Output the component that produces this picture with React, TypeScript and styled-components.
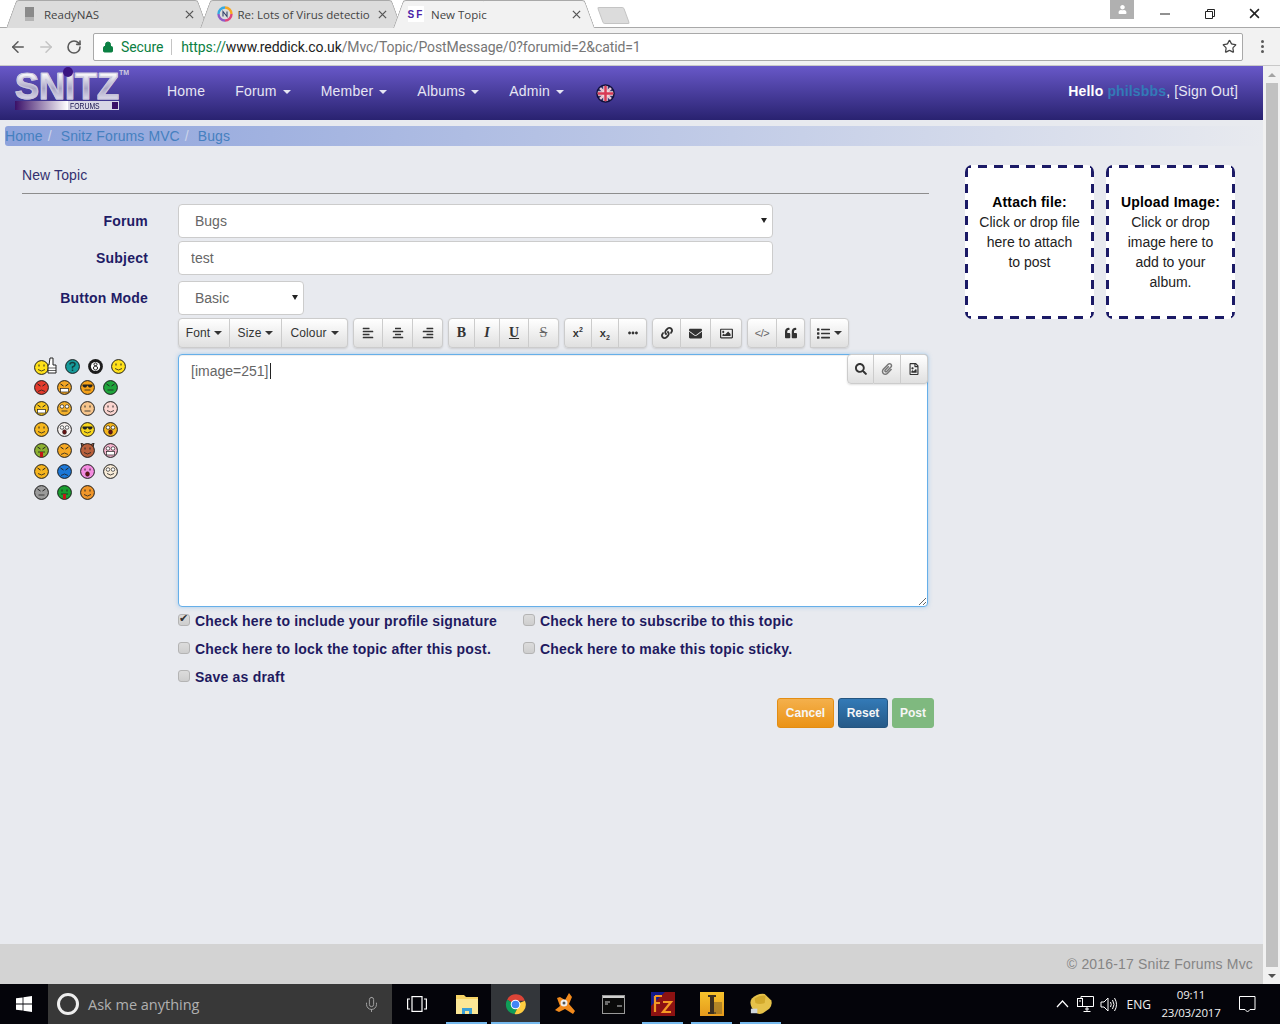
import React from 'react'
import styled, {createGlobalStyle} from 'styled-components'
import {ArrowLeft, ArrowRight, RotateCw, Star, Lock, Mic} from 'lucide-react'
import {
  FaAlignLeft, FaAlignCenter, FaAlignRight, FaEllipsisH, FaLink, FaEnvelope, FaRegImage,
  FaQuoteLeft, FaList, FaSearch, FaPaperclip, FaRegFileImage, FaUser,
} from 'react-icons/fa'

const GlobalStyle = createGlobalStyle`
  html, body { margin: 0; padding: 0; height: 100%; overflow: hidden; }
  body { font-family: "Liberation Sans", Arial, sans-serif; font-size: 14px; color: #333; }
  * { box-sizing: border-box; }
`

const Screen = styled.div`
  width: 1280px;
  height: 1024px;
  display: flex;
  flex-direction: column;
  overflow: hidden;
  background: #fff;
`

/* browser chrome */
const TabStrip = styled.div`
  height: 28px;
  flex: none;
  display: flex;
  padding-left: 6px;
  background: #fff;
  position: relative;
  border-bottom: 1px solid #a9a9a9;
`

const Tab = styled.div<{$active?: boolean}>`
  position: relative;
  width: 202px;
  height: 28px;
  margin-right: -8.5px;
  padding: 0 12px 0 19px;
  display: flex;
  align-items: center;
  z-index: ${p => (p.$active ? 2 : 1)};
  font-family: "Open Sans", sans-serif;
  font-size: 11.5px;
  color: #444;
  &::before, &::after {
    content: "";
    position: absolute;
    top: 0;
    bottom: 0;
    width: 50%;
    background: ${p => (p.$active ? '#f2f2f2' : '#dcdcdc')};
    border-top: 1px solid #a9a9a9;
    transform-origin: bottom;
  }
  &::before {
    left: 0;
    border-left: 1px solid #a9a9a9;
    border-radius: 3px 0 0 0;
    transform: skewX(-20deg);
  }
  &::after {
    right: 0;
    border-right: 1px solid #a9a9a9;
    border-radius: 0 3px 0 0;
    transform: skewX(20deg);
  }
  & > * { position: relative; z-index: 1; }
`

const Favicon = styled.span`
  width: 16px;
  height: 16px;
  margin-right: 3px;
  flex: none;
  display: flex;
  align-items: center;
`

const NewsFav = styled(Favicon)`
  margin-left: -2px;
  margin-right: 5px;
`

const SnitzFav = styled(Favicon)`
  margin-left: -4px;
  margin-right: 7px;
  justify-content: center;
  background: #fff;
  font: bold 10px "Liberation Sans", sans-serif;
  letter-spacing: 2px;
  color: #4b1fa8;
`

const TabTitle = styled.span`
  flex: 1;
  min-width: 0;
  white-space: nowrap;
`

const TabClose = styled.span`
  width: 14px;
  flex: none;
  margin-left: 6px;
  display: flex;
  justify-content: center;
  color: #555;
`

const NewTab = styled.div`
  width: 27px;
  height: 17px;
  margin: 7px 0 0 13px;
  background: #dcdcdc;
  border: 1px solid #c4c4c4;
  border-radius: 2px;
  transform: skewX(20deg);
`

const WindowControls = styled.div`
  margin-left: auto;
  padding-right: 3px;
  display: flex;
  align-items: flex-start;
  height: 27px;
`

const ProfileBadge = styled.div`
  width: 24px;
  height: 19px;
  margin-right: 8px;
  background: #b0b0b0;
  color: #fff;
  display: flex;
  align-items: center;
  justify-content: center;
`

const WinButton = styled.div`
  width: 45px;
  height: 27px;
  display: flex;
  align-items: center;
  justify-content: center;
`

const Toolbar = styled.div`
  height: 38px;
  flex: none;
  display: flex;
  align-items: center;
  background: #f2f2f2;
  border-bottom: 1px solid #c9c9c9;
  color: #5a5a5a;
`

const NavIcon = styled.div<{$dim?: boolean}>`
  width: 28px;
  height: 28px;
  display: flex;
  align-items: center;
  justify-content: center;
  color: ${p => (p.$dim ? '#c4c4c4' : '#5a5a5a')};
`

const NavIcons = styled.div`
  display: flex;
  padding-left: 4px;
  width: 93px;
`

const Omnibox = styled.div`
  width: 1150px;
  height: 28px;
  background: #fff;
  border: 1px solid #a9a9a9;
  border-radius: 2px;
  display: flex;
  align-items: center;
  padding-left: 8px;
  font-family: "Roboto", sans-serif;
  font-size: 14px;
  letter-spacing: -.1px;
  white-space: nowrap;
`

const SecureLabel = styled.span`
  color: #0b8043;
  margin-left: 7px;
  padding-right: 8px;
  border-right: 1px solid #c4c4c4;
  margin-right: 9px;
`

const Scheme = styled.span`color: #0b8043;`
const Host = styled.span`color: #222;`
const UrlPath = styled.span`color: #767676;`

const OmniStar = styled.div`
  margin-left: auto;
  padding-right: 5px;
  display: flex;
  color: #444;
`

const MenuDots = styled.div`
  margin-left: 18px;
  display: flex;
  flex-direction: column;
  gap: 2px;
  & > span { width: 3px; height: 3px; background: #5a5a5a; border-radius: 50%; }
`

/* page */
const Viewport = styled.div`
  flex: 1;
  display: flex;
  min-height: 0;
`

const Page = styled.div`
  width: 1263px;
  display: flex;
  flex-direction: column;
  background: #e8eaef;
`

const ScrollBar = styled.div`
  width: 17px;
  padding: 0 2px 0 3px;
  background: #f1f1f1;
  display: flex;
  flex-direction: column;
  align-items: stretch;
`

const ScrollArrow = styled.div<{$down?: boolean}>`
  height: 17px;
  flex: none;
  display: flex;
  align-items: center;
  justify-content: center;
  &::before {
    content: "";
    border-left: 4px solid transparent;
    border-right: 4px solid transparent;
    ${p => (p.$down ? 'border-top: 4px solid #505050;' : 'border-bottom: 4px solid #a3a3a3;')}
  }
`

const ScrollThumb = styled.div`
  flex: 1;
  background: #c1c1c1;
`

const NavBar = styled.div`
  height: 54px;
  flex: none;
  display: flex;
  align-items: center;
  padding: 0 25px 4px 0;
  background: linear-gradient(#6858c8, #292270);
  color: #e6e6f4;
`

const Logo = styled.div`
  width: 152px;
  padding-left: 15px;
  position: relative;
  flex: none;
`

const LogoWord = styled.div`
  font: bold 36px/28px "Liberation Sans", sans-serif;
  background: linear-gradient(#ffffff, #a8a4c4 55%, #e4e2f0);
  -webkit-background-clip: text;
  background-clip: text;
  color: transparent;
  -webkit-text-stroke: 1.2px #c9c6dc;
`

const LogoBall = styled.span`
  position: absolute;
  left: 63px;
  top: -6px;
  width: 10px;
  height: 10px;
  border-radius: 50%;
  background: #3a1480;
  z-index: 1;
`

const LogoTm = styled.span`
  position: absolute;
  left: 119px;
  top: -4px;
  font-size: 7px;
  font-weight: bold;
  color: #cfcde0;
`

const LogoBar = styled.div`
  display: flex;
  align-items: center;
  height: 9px;
  width: 104px;
  background: #d8d6e6;
`

const LogoFade = styled.div`
  width: 63px;
  height: 9px;
  margin-right: 2px;
  background: linear-gradient(90deg, #3a1068, #ffffff);
`

const LogoForums = styled.span`
  font-size: 9.5px;
  line-height: 9px;
  color: #17124e;
  flex: 1;
  white-space: nowrap;
  transform: scaleX(.72);
  transform-origin: left;
`

const LogoSquare = styled.div`
  width: 9px;
  height: 9px;
  background: #3a1068;
  border: 1px solid #d8d6e8;
`

const NavItem = styled.a`
  padding: 0 15px;
  font-size: 14px;
  letter-spacing: .2px;
  white-space: nowrap;
  color: #e6e6f4;
`

const Caret = styled.span`
  display: inline-block;
  margin-left: 2px;
  vertical-align: middle;
  border-top: 4px solid;
  border-left: 4px solid transparent;
  border-right: 4px solid transparent;
`

const FlagWrap = styled.div`
  margin: 4px 0 0 17px;
  width: 19px;
  height: 19px;
`

const Greeting = styled.div`
  margin-left: auto;
  white-space: nowrap;
  letter-spacing: .15px;
  color: #e6e6f4;
  b { color: #fff; }
`

const UserLink = styled.b`
  && { color: #337ab7; }
`

const Breadcrumb = styled.div`
  height: 20px;
  margin: 6px 0 0 5px;
  display: flex;
  align-items: center;
  border-radius: 3px 0 0 3px;
  background: linear-gradient(90deg, #8ea3dc, #e8eaef);
  color: #4580c0;
  letter-spacing: .1px;
  flex: none;
`

const CrumbSep = styled.span`
  padding: 0 5px;
  color: #ccd4ea;
  white-space: pre;
`

const Content = styled.div`
  flex: 1;
  display: flex;
  align-items: flex-start;
  padding: 19px 0 0 22px;
`

const FormColumn = styled.div`
  width: 907px;
  flex: none;
`

const Heading = styled.div`
  height: 29px;
  line-height: 20px;
  letter-spacing: .1px;
  color: #33306f;
  border-bottom: 1px solid #8d8d8d;
  margin-bottom: 10px;
`

const FieldRow = styled.div<{$gap?: number}>`
  display: grid;
  grid-template-columns: 126px 1fr;
  column-gap: 30px;
  align-items: center;
  margin-bottom: ${p => p.$gap ?? 0}px;
`

const FieldLabel = styled.label`
  text-align: right;
  font-weight: bold;
  letter-spacing: .2px;
  color: #1f1c66;
`

const SelectWrap = styled.div<{$width: number}>`
  position: relative;
  width: ${p => p.$width}px;
  &::after {
    content: "";
    position: absolute;
    right: 6px;
    top: 14px;
    border-top: 5px solid #222;
    border-left: 3px solid transparent;
    border-right: 3px solid transparent;
    pointer-events: none;
  }
`

const Select = styled.select`
  width: 100%;
  height: 34px;
  padding: 6px 12px 6px 16px;
  appearance: none;
  background: #fff;
  border: 1px solid #ccc;
  border-radius: 4px;
  font: 14px "Liberation Sans", sans-serif;
  color: #666;
`

const TextInput = styled.input`
  width: 595px;
  height: 34px;
  padding: 6px 12px;
  background: #fff;
  border: 1px solid #ccc;
  border-radius: 4px;
  font: 14px "Liberation Sans", sans-serif;
  color: #666;
`

const EditorToolbar = styled.div`
  display: flex;
  height: 30px;
  gap: 5px;
  margin-bottom: 6px;
`

const BtnGroup = styled.div`
  display: flex;
  border-radius: 4px;
  box-shadow: 0 1px 2px rgba(0, 0, 0, .12);
`

const ToolBtn = styled.div<{$w: number; $serif?: boolean}>`
  width: ${p => p.$w}px;
  height: 30px;
  display: flex;
  align-items: center;
  justify-content: center;
  gap: 2px;
  background: linear-gradient(#ffffff, #e0e0e0);
  border: 1px solid #ccc;
  border-left-width: 0;
  font: ${p => (p.$serif ? 'bold 14px "Liberation Serif", serif' : '12px "Liberation Sans", sans-serif')};
  letter-spacing: ${p => (p.$serif ? 0 : '.15px')};
  color: #333;
  &:first-child { border-left-width: 1px; border-radius: 4px 0 0 4px; }
  &:last-child { border-radius: 0 4px 4px 0; }
`

const ItalicMark = styled.i`font-weight: bold;`
const UnderMark = styled.u`font-weight: bold;`
const StrikeMark = styled.s`font-weight: normal; color: #666;`
const ScriptX = styled.b`font: bold 11px "Liberation Sans", sans-serif;`
const CodeMark = styled.span`font-size: 11px; color: #666; letter-spacing: -.5px;`
const SupMark = styled.sup`font-size: 7px; line-height: 0;`
const SubMark = styled.sub`font-size: 7px; line-height: 0;`

const EditorRow = styled.div`
  display: grid;
  grid-template-columns: 156px 1fr;
`

const Smileys = styled.div`
  padding: 5px 0 0 12px;
  display: flex;
  flex-direction: column;
  gap: 6px;
`

const SmileyRow = styled.div`
  display: flex;
  gap: 8px;
  height: 15px;
  align-items: center;
`

const EditorWrap = styled.div`
  position: relative;
  width: 750px;
  height: 253px;
`

const EditorArea = styled.textarea`
  display: block;
  width: 100%;
  height: 100%;
  padding: 6px 12px;
  background: #fff;
  border: 1px solid #66afe9;
  border-radius: 4px;
  font: 14px/20px "Liberation Sans", sans-serif;
  color: #666;
  outline: none;
  box-shadow: inset 0 1px 1px rgba(0, 0, 0, .075), 0 0 4px rgba(102, 175, 233, .5);
`

const TextCaret = styled.span`
  position: absolute;
  left: 92px;
  top: 9px;
  width: 1px;
  height: 16px;
  background: #222;
`

const FloatTools = styled(BtnGroup)`
  position: absolute;
  top: 0;
  right: 0;
`

const OptionsGrid = styled.div`
  margin: 0 0 0 156px;
  display: grid;
  grid-template-columns: 345px 1fr;
  grid-auto-rows: 28px;
`

const OptionLabel = styled.label`
  display: flex;
  align-items: center;
  gap: 5px;
  font-weight: bold;
  letter-spacing: .2px;
  color: #1f1a60;
  white-space: nowrap;
`

const CheckBox = styled.input`
  appearance: none;
  width: 12px;
  height: 12px;
  margin: -3px 0 0 0;
  position: relative;
  background: linear-gradient(#dcdcdc, #cecece);
  border: 1px solid #b4b4b4;
  border-radius: 3px;
  &:checked::after {
    content: "✔";
    position: absolute;
    left: 0;
    top: -3px;
    font-size: 11px;
    color: #333;
  }
`

const Actions = styled.div`
  display: flex;
  justify-content: flex-end;
  gap: 4px;
  margin: 7px -5px 0 0;
`

const variants = {
  warning: 'background: linear-gradient(#f4b04c, #eb9316); border-color: #e38d13;',
  primary: 'background: linear-gradient(#337ab7, #265a88); border-color: #245580;',
  success: 'background: #7fb97f; border-color: #7fb97f;',
}

const ActionBtn = styled.div<{$kind: keyof typeof variants; $w: number}>`
  width: ${p => p.$w}px;
  height: 30px;
  display: flex;
  align-items: center;
  justify-content: center;
  border: 1px solid;
  border-radius: 3px;
  font-size: 12px;
  font-weight: bold;
  color: #f6f6f6;
  ${p => variants[p.$kind]}
`

const DropColumn = styled.div`
  display: flex;
  gap: 12px;
  margin-left: 36px;
`

const dashH = 'linear-gradient(90deg, #1b1a66 9px, transparent 9px)'
const dashV = 'linear-gradient(#1b1a66 9px, transparent 9px)'

const DropBox = styled.div`
  width: 129px;
  height: 154px;
  padding: 27px 11px 0;
  border-radius: 7px;
  background:
    ${dashH} 13px 0 / 16px 3px repeat-x,
    ${dashH} 13px 100% / 16px 3px repeat-x,
    ${dashV} 0 3px / 3px 16px repeat-y,
    ${dashV} 100% 3px / 3px 16px repeat-y,
    #fff;
  text-align: center;
  line-height: 20px;
  color: #222;
  b { display: block; color: #000; letter-spacing: .2px; white-space: nowrap; margin: 0 -4px; }
`

const Footer = styled.div`
  height: 40px;
  flex: none;
  background: #d3d3d3;
  display: flex;
  align-items: center;
  justify-content: flex-end;
  padding: 0 10px 0 0;
  letter-spacing: .18px;
  color: #858585;
`

/* windows taskbar */
const Taskbar = styled.div`
  height: 40px;
  flex: none;
  display: flex;
  align-items: stretch;
  background: #04040a;
  color: #fff;
`

const StartBtn = styled.div`
  width: 48px;
  display: flex;
  align-items: center;
  justify-content: center;
`

const SearchBox = styled.div`
  width: 344px;
  display: flex;
  align-items: center;
  padding-left: 9px;
  background: #383838;
  color: #b0b0b0;
  font-family: "Open Sans", sans-serif;
  font-size: 14.5px;
`

const Cortana = styled.span`
  width: 22px;
  height: 22px;
  border: 3px solid #eee;
  border-radius: 50%;
  margin-right: 9px;
`

const SearchMic = styled.span`
  margin-left: auto;
  margin-right: 12px;
  display: flex;
  color: #a8a8a8;
`

const TaskBtn = styled.div<{$active?: boolean; $open?: boolean}>`
  width: 49px;
  position: relative;
  display: flex;
  align-items: center;
  justify-content: center;
  background: ${p => (p.$active ? '#33363a' : 'transparent')};
  &::after {
    content: "";
    position: absolute;
    bottom: 0;
    left: ${p => (p.$active ? 0 : 4)}px;
    right: ${p => (p.$active ? 0 : 4)}px;
    height: 2px;
    background: ${p => (p.$open ? '#76b9ed' : 'transparent')};
  }
`

const TaskViewBtn = styled(TaskBtn)`
  width: 50px;
`

const Tray = styled.div`
  margin-left: auto;
  display: flex;
  align-items: center;
  font-family: "Open Sans", sans-serif;
  font-size: 12px;
  color: #f0f0f0;
`

const TrayIcon = styled.span`
  width: 23px;
  display: flex;
  justify-content: center;
`

const TrayLang = styled.span`
  margin: 0 7px 0 7px;
`

const Clock = styled.div`
  width: 66px;
  text-align: center;
  line-height: 18px;
  font-size: 11.5px;
  letter-spacing: -.2px;
`

const Notify = styled.span`
  width: 30px;
  margin: 0 18px 0 8px;
  display: flex;
  justify-content: center;
`

/* drawings */
type FaceProps = {
  color: string
  eyes?: 'dot' | 'wide' | 'shades' | 'angry'
  mouth?: 'smile' | 'frown' | 'flat' | 'teeth' | 'open' | 'tongue'
  horns?: boolean
}

function Face({color, eyes = 'dot', mouth = 'smile', horns}: FaceProps) {
  return (
    <svg width="15" height="15" viewBox="0 0 15 15">
      {horns && <path d="M2 4L1 0L5 2M13 4L14 0L10 2" fill={color} stroke="#222" />}
      <circle cx="7.5" cy="7.5" r="6.9" fill={color} stroke="#1c1c1c" strokeWidth="1" />
      {eyes === 'dot' && <path d="M5 4.5v2M10 4.5v2" stroke="#222" />}
      {eyes === 'wide' && (
        <g fill="#fff" stroke="#222" strokeWidth=".7">
          <circle cx="5" cy="5.5" r="1.8" />
          <circle cx="10" cy="5.5" r="1.8" />
        </g>
      )}
      {eyes === 'shades' && <path d="M2.5 4.5h10v1.5l-1.5 1.5h-2l-1.5-2-1.5 2h-2L2.5 6z" fill="#222" />}
      {eyes === 'angry' && <path d="M3.5 4l3 2M11.5 4l-3 2" stroke="#222" />}
      {mouth === 'smile' && <path d="M4 9.5q3.5 3 7 0" fill="none" stroke="#222" strokeWidth=".8" />}
      {mouth === 'frown' && <path d="M4 11.5q3.5-3 7 0" fill="none" stroke="#222" strokeWidth=".8" />}
      {mouth === 'flat' && <path d="M4.5 10h6" stroke="#222" strokeWidth=".8" />}
      {mouth === 'teeth' && <rect x="3.5" y="8.5" width="8" height="3.5" fill="#fff" stroke="#222" strokeWidth=".7" />}
      {mouth === 'open' && <ellipse cx="7.5" cy="10" rx="2" ry="2.3" fill="#611" stroke="#222" strokeWidth=".5" />}
      {mouth === 'tongue' && (
        <>
          <path d="M4 9h7" stroke="#222" strokeWidth=".8" />
          <path d="M6 9h3v5H6z" fill="#c01818" />
        </>
      )}
    </svg>
  )
}

function ThumbsFace() {
  return (
    <svg width="23" height="19" viewBox="0 0 23 19">
      <circle cx="7.5" cy="10.5" r="6.9" fill="#ffe11a" stroke="#1c1c1c" />
      <path d="M5 7.5v2M10 7.5v2" stroke="#222" />
      <path d="M4 12.5q3.5 3 7 0" fill="none" stroke="#222" strokeWidth=".8" />
      <path d="M15 8h-1v8h8V8h-3V1h-3z" fill="#fff" stroke="#222" />
      <path d="M14 11h8M14 13.5h8" stroke="#222" strokeWidth=".7" />
    </svg>
  )
}

function HelpFace() {
  return (
    <svg width="15" height="15" viewBox="0 0 15 15">
      <circle cx="7.5" cy="7.5" r="6.9" fill="#159a9a" stroke="#1c1c1c" />
      <path d="M5 5.5q0-2 2.5-2t2.5 2q0 1.5-2.5 2.5v1.5M7.5 10.5v1.5" fill="none" stroke="#143c3c" strokeWidth="1.5" />
    </svg>
  )
}

function EightBall() {
  return (
    <svg width="15" height="15" viewBox="0 0 15 15">
      <circle cx="7.5" cy="7.5" r="7.4" fill="#1c1c1c" />
      <circle cx="7.5" cy="7.5" r="4.6" fill="#fff" />
      <path d="M7.5 3.9a1.5 1.5 0 1 0 .01 0M7.5 7a2 2 0 1 0 .01 0" fill="none" stroke="#111" />
    </svg>
  )
}

const smileyRows: FaceProps[][] = [
  [{color: '#e33a2c', eyes: 'angry', mouth: 'frown'}, {color: '#f4a623', eyes: 'angry', mouth: 'teeth'}, {color: '#f6a21a', eyes: 'shades', mouth: 'flat'}, {color: '#1fa53c', eyes: 'angry', mouth: 'flat'}],
  [{color: '#f7c51e', eyes: 'angry', mouth: 'teeth'}, {color: '#f4b12c', eyes: 'wide', mouth: 'flat'}, {color: '#f6c58c', eyes: 'dot', mouth: 'flat'}, {color: '#fbd5d0', eyes: 'dot', mouth: 'smile'}],
  [{color: '#f6b71d'}, {color: '#f5f0ee', eyes: 'wide', mouth: 'open'}, {color: '#f9d71c', eyes: 'shades'}, {color: '#f6b71d', eyes: 'wide', mouth: 'open'}],
  [{color: '#8cb031', eyes: 'angry', mouth: 'tongue'}, {color: '#f6a823', eyes: 'angry', mouth: 'frown'}, {color: '#b8603c', horns: true}, {color: '#f7b6d0', eyes: 'wide', mouth: 'teeth'}],
  [{color: '#f6b41d', eyes: 'angry'}, {color: '#1c78d8', eyes: 'angry', mouth: 'frown'}, {color: '#f48ce0', mouth: 'open'}, {color: '#f8ecd8', eyes: 'wide', mouth: 'smile'}],
  [{color: '#9a9a9a', eyes: 'angry', mouth: 'flat'}, {color: '#1a9e30', mouth: 'tongue'}, {color: '#f0962a'}],
]

function UkFlag() {
  return (
    <svg width="19" height="19" viewBox="0 0 19 19">
      <defs>
        <clipPath id="flag-round"><circle cx="9.5" cy="9.5" r="7.8" /></clipPath>
      </defs>
      <circle cx="9.5" cy="9.5" r="9.3" fill="#12103a" />
      <g clipPath="url(#flag-round)">
        <rect width="19" height="19" fill="#34356f" />
        <path d="M0 0L19 19M19 0L0 19" stroke="#e8c4d0" strokeWidth="2.5" />
        <path d="M9.5 0V19M0 9.5H19" stroke="#f0d8dc" strokeWidth="4.5" />
        <path d="M9.5 0V19M0 9.5H19" stroke="#d83a55" strokeWidth="2.5" />
      </g>
    </svg>
  )
}

function ChromeIcon() {
  return (
    <svg width="23" height="23" viewBox="0 0 24 24">
      <path d="M12 12L3.3 7A10 10 0 0 1 21.8 8H12z" fill="#db4437" />
      <path d="M12 12L3.3 7A10 10 0 0 0 11 22L16 12z" fill="#0f9d58" />
      <path d="M12 12L21.8 8A10 10 0 0 1 11 22L16 12z" fill="#ffcd40" />
      <circle cx="12" cy="12" r="5" fill="#fff" />
      <circle cx="12" cy="12" r="4" fill="#4285f4" />
    </svg>
  )
}

function FolderIcon() {
  return (
    <svg width="22" height="20" viewBox="0 0 22 20">
      <path d="M0 1h8l2 2h12v17H0z" fill="#f6d365" />
      <path d="M0 5h22v15H0z" fill="#fbe796" />
      <path d="M6 20v-6h10v6h-3v-3h-4v3z" fill="#3aa0d8" />
    </svg>
  )
}

function AvastIcon() {
  return (
    <svg width="24" height="24" viewBox="0 0 24 24">
      <path d="M16 1l3 4-3 7 6 7-2 3-8-5-6 3-4-2 5-4-3-8 3-1 5 3z" fill="#f28a1c" />
      <circle cx="11" cy="11" r="3.5" fill="#eee" />
      <circle cx="11" cy="11" r="1.5" fill="#555" />
    </svg>
  )
}

function ConsoleIcon() {
  return (
    <svg width="23" height="19" viewBox="0 0 23 19">
      <rect x=".5" y=".5" width="22" height="18" fill="#0a0a0a" stroke="#999" />
      <rect x="1" y="1" width="21" height="2" fill="#cfcfcf" />
      <path d="M3 7h5M3 9h3M15 11h5" stroke="#ccc" />
    </svg>
  )
}

function FileZillaIcon() {
  return (
    <svg width="24" height="24" viewBox="0 0 24 24">
      <rect width="24" height="24" fill="#8c1212" />
      <path d="M0 0h14L0 14z" fill="#141a8a" />
      <path d="M4 4h7M4 4v16M4 11h5M12 10h8l-8 10h8" fill="none" stroke="#f49a24" strokeWidth="2.2" />
    </svg>
  )
}

function IdeaIcon() {
  return (
    <svg width="24" height="24" viewBox="0 0 24 24">
      <defs>
        <linearGradient id="idea-fill" x1="0" y1="0" x2="0" y2="1">
          <stop offset="0" stopColor="#f6c22c" />
          <stop offset="1" stopColor="#e59a1c" />
        </linearGradient>
      </defs>
      <rect width="24" height="24" fill="url(#idea-fill)" />
      <path d="M8 3h8v2h-2v15h2v2H8v-2h2V5H8z" fill="#3c3020" />
      <path d="M14 10h8v12h-8z" fill="#8a6a2a" opacity=".6" />
    </svg>
  )
}

function DriveIcon() {
  return (
    <svg width="24" height="23" viewBox="0 0 26 25">
      <path d="M3 6q6-6 14-5l7 7q2 4-2 9l-7 5q-5 2-8-1L3 16Q0 10 3 6z" fill="#e6c24a" />
      <path d="M6 6q6-4 12-3l-1 8q-6 2-10 0z" fill="#d2a92c" />
      <rect x="2" y="17" width="7" height="5" fill="#cfd6dc" />
    </svg>
  )
}

function WindowsLogo() {
  return (
    <svg width="16" height="16" viewBox="0 0 16 16" fill="#fff">
      <path d="M0 2.3L6.6 1.4V7.6H0zM7.4 1.3L16 0V7.6H7.4zM0 8.4H6.6V14.6L0 13.7zM7.4 8.4H16V16L7.4 14.7z" />
    </svg>
  )
}

function TaskViewIcon() {
  return (
    <svg width="20" height="16" viewBox="0 0 20 16" fill="none" stroke="#fff" strokeWidth="1.2">
      <rect x="5" y=".6" width="10" height="14.8" />
      <path d="M3 3H.6v10H3M17 3h2.4v10H17" />
    </svg>
  )
}

function ChevronUp() {
  return (
    <svg width="13" height="8" viewBox="0 0 13 8" fill="none" stroke="#fff" strokeWidth="1.2">
      <path d="M1 7l5.5-6L12 7" />
    </svg>
  )
}

function NetworkIcon() {
  return (
    <svg width="17" height="16" viewBox="0 0 17 16" fill="none" stroke="#fff">
      <path d="M4 .5h12.5v10H4zM8 13h4M10 10.5V15M6.5 15.5h7" />
      <rect x=".5" y="2.5" width="5" height="8" fill="#04040a" />
      <path d="M2 5h2" />
    </svg>
  )
}

function VolumeIcon() {
  return (
    <svg width="17" height="15" viewBox="0 0 17 15" fill="none" stroke="#fff">
      <path d="M1 5h3l4-4v13l-4-4H1zM10.5 5q1.5 2.5 0 5M12.5 3q3 4.5 0 9M14.5 1q4 6.5 0 13" />
    </svg>
  )
}

function CommentIcon() {
  return (
    <svg width="17" height="17" viewBox="0 0 17 17" fill="none" stroke="#fff">
      <path d="M.5 .5h15.5v13h-5l-2.5 2.5-2.500-2.500H.5z" />
    </svg>
  )
}

function CloseGlyph({size, stroke}: {size: number; stroke: string}) {
  return (
    <svg width={size} height={size} viewBox="0 0 10 10" fill="none" stroke={stroke} strokeWidth="1.4">
      <path d="M1 1l8 8M9 1l-8 8" />
    </svg>
  )
}

function NasFavicon() {
  return (
    <svg width="9" height="14" viewBox="0 0 9 14">
      <rect width="9" height="14" fill="#8a8a8a" />
      <rect y="10" width="9" height="4" fill="#b4b4b4" />
    </svg>
  )
}

function NewsFavicon() {
  return (
    <svg width="16" height="16" viewBox="0 0 16 16" fill="none" strokeWidth="2.4">
      <path d="M8 1.5A6.5 6.5 0 0 1 14.5 8" stroke="#f5a623" />
      <path d="M14.5 8A6.5 6.5 0 0 1 8 14.5" stroke="#e0457b" />
      <path d="M8 14.5A6.5 6.5 0 0 1 1.5 8" stroke="#8e5bc7" />
      <path d="M1.5 8A6.5 6.5 0 0 1 8 1.5" stroke="#36a9e1" />
      <path d="M6 10.5v-5l4 5v-5" stroke="#34406b" strokeWidth="1.1" />
    </svg>
  )
}

export default function App() {
  return (
    <Screen>
      <GlobalStyle />
      <TabStrip>
        <Tab>
          <Favicon><NasFavicon /></Favicon>
          <TabTitle>ReadyNAS</TabTitle>
          <TabClose><CloseGlyph size={9} stroke="#555" /></TabClose>
        </Tab>
        <Tab>
          <NewsFav><NewsFavicon /></NewsFav>
          <TabTitle>Re: Lots of Virus detectio</TabTitle>
          <TabClose><CloseGlyph size={9} stroke="#555" /></TabClose>
        </Tab>
        <Tab $active>
          <SnitzFav>SF</SnitzFav>
          <TabTitle>New Topic</TabTitle>
          <TabClose><CloseGlyph size={9} stroke="#555" /></TabClose>
        </Tab>
        <NewTab />
        <WindowControls>
          <ProfileBadge><FaUser size={9} /></ProfileBadge>
          <WinButton>
            <svg width="10" height="2" viewBox="0 0 10 2"><path d="M0 1h10" stroke="#222" /></svg>
          </WinButton>
          <WinButton>
            <svg width="10" height="10" viewBox="0 0 10 10" fill="none" stroke="#222">
              <path d="M.5 2.5h7v7h-7zM2.5 2.5v-2h7v7h-2" />
            </svg>
          </WinButton>
          <WinButton><CloseGlyph size={11} stroke="#222" /></WinButton>
        </WindowControls>
      </TabStrip>

      <Toolbar>
        <NavIcons>
          <NavIcon><ArrowLeft size={18} /></NavIcon>
          <NavIcon $dim><ArrowRight size={18} /></NavIcon>
          <NavIcon><RotateCw size={16} strokeWidth={2.4} /></NavIcon>
        </NavIcons>
        <Omnibox>
          <Lock size={12} color="#0b8043" fill="#0b8043" />
          <SecureLabel>Secure</SecureLabel>
          <Scheme>https://</Scheme>
          <Host>www.reddick.co.uk</Host>
          <UrlPath>/Mvc/Topic/PostMessage/0?forumid=2&amp;catid=1</UrlPath>
          <OmniStar><Star size={15} /></OmniStar>
        </Omnibox>
        <MenuDots><span /><span /><span /></MenuDots>
      </Toolbar>

      <Viewport>
        <Page>
          <NavBar>
            <Logo>
              <LogoBall />
              <LogoTm>TM</LogoTm>
              <LogoWord>SNITZ</LogoWord>
              <LogoBar>
                <LogoFade />
                <LogoForums>FORUMS</LogoForums>
                <LogoSquare />
              </LogoBar>
            </Logo>
            <NavItem>Home</NavItem>
            <NavItem>Forum <Caret /></NavItem>
            <NavItem>Member <Caret /></NavItem>
            <NavItem>Albums <Caret /></NavItem>
            <NavItem>Admin <Caret /></NavItem>
            <FlagWrap><UkFlag /></FlagWrap>
            <Greeting><b>Hello</b> <UserLink>philsbbs</UserLink>, [Sign Out]</Greeting>
          </NavBar>

          <Breadcrumb>
            Home<CrumbSep>/ </CrumbSep>Snitz Forums MVC<CrumbSep>/ </CrumbSep>Bugs
          </Breadcrumb>

          <Content>
            <FormColumn>
              <Heading>New Topic</Heading>
              <FieldRow $gap={3}>
                <FieldLabel>Forum</FieldLabel>
                <SelectWrap $width={595}>
                  <Select defaultValue="Bugs"><option>Bugs</option></Select>
                </SelectWrap>
              </FieldRow>
              <FieldRow $gap={6}>
                <FieldLabel>Subject</FieldLabel>
                <TextInput defaultValue="test" />
              </FieldRow>
              <FieldRow $gap={3}>
                <FieldLabel>Button Mode</FieldLabel>
                <SelectWrap $width={126}>
                  <Select defaultValue="Basic"><option>Basic</option></Select>
                </SelectWrap>
              </FieldRow>
              <FieldRow>
                <span />
                <EditorToolbar>
                  <BtnGroup>
                    <ToolBtn $w={52}>Font <Caret /></ToolBtn>
                    <ToolBtn $w={52}>Size <Caret /></ToolBtn>
                    <ToolBtn $w={66}>Colour <Caret /></ToolBtn>
                  </BtnGroup>
                  <BtnGroup>
                    <ToolBtn $w={30}><FaAlignLeft size={12} /></ToolBtn>
                    <ToolBtn $w={30}><FaAlignCenter size={12} /></ToolBtn>
                    <ToolBtn $w={30}><FaAlignRight size={12} /></ToolBtn>
                  </BtnGroup>
                  <BtnGroup>
                    <ToolBtn $w={27} $serif>B</ToolBtn>
                    <ToolBtn $w={25} $serif><ItalicMark>I</ItalicMark></ToolBtn>
                    <ToolBtn $w={29} $serif><UnderMark>U</UnderMark></ToolBtn>
                    <ToolBtn $w={30} $serif><StrikeMark>S</StrikeMark></ToolBtn>
                  </BtnGroup>
                  <BtnGroup>
                    <ToolBtn $w={28}><ScriptX>x<SupMark>2</SupMark></ScriptX></ToolBtn>
                    <ToolBtn $w={27}><ScriptX>x<SubMark>2</SubMark></ScriptX></ToolBtn>
                    <ToolBtn $w={28}><FaEllipsisH size={10} /></ToolBtn>
                  </BtnGroup>
                  <BtnGroup>
                    <ToolBtn $w={29}><FaLink size={12} /></ToolBtn>
                    <ToolBtn $w={30}><FaEnvelope size={13} /></ToolBtn>
                    <ToolBtn $w={31}><FaRegImage size={13} /></ToolBtn>
                  </BtnGroup>
                  <BtnGroup>
                    <ToolBtn $w={30}><CodeMark>&lt;/&gt;</CodeMark></ToolBtn>
                    <ToolBtn $w={28}><FaQuoteLeft size={12} /></ToolBtn>
                  </BtnGroup>
                  <BtnGroup>
                    <ToolBtn $w={39}><FaList size={13} /><Caret /></ToolBtn>
                  </BtnGroup>
                </EditorToolbar>
              </FieldRow>

              <EditorRow>
                <Smileys>
                  <SmileyRow>
                    <ThumbsFace />
                    <HelpFace />
                    <EightBall />
                    <Face color="#ffe11a" />
                  </SmileyRow>
                  {smileyRows.map((row, i) => (
                    <SmileyRow key={i}>
                      {row.map((f, j) => <Face key={j} {...f} />)}
                    </SmileyRow>
                  ))}
                </Smileys>
                <EditorWrap>
                  <EditorArea defaultValue="[image=251]" />
                  <TextCaret />
                  <FloatTools>
                    <ToolBtn $w={27}><FaSearch size={12} /></ToolBtn>
                    <ToolBtn $w={27}><FaPaperclip size={12} color="#777" /></ToolBtn>
                    <ToolBtn $w={27}><FaRegFileImage size={12} /></ToolBtn>
                  </FloatTools>
                </EditorWrap>
              </EditorRow>

              <OptionsGrid>
                <OptionLabel><CheckBox type="checkbox" defaultChecked />Check here to include your profile signature</OptionLabel>
                <OptionLabel><CheckBox type="checkbox" />Check here to subscribe to this topic</OptionLabel>
                <OptionLabel><CheckBox type="checkbox" />Check here to lock the topic after this post.</OptionLabel>
                <OptionLabel><CheckBox type="checkbox" />Check here to make this topic sticky.</OptionLabel>
                <OptionLabel><CheckBox type="checkbox" />Save as draft</OptionLabel>
              </OptionsGrid>

              <Actions>
                <ActionBtn $kind="warning" $w={57}>Cancel</ActionBtn>
                <ActionBtn $kind="primary" $w={50}>Reset</ActionBtn>
                <ActionBtn $kind="success" $w={42}>Post</ActionBtn>
              </Actions>
            </FormColumn>

            <DropColumn>
              <DropBox><b>Attach file:</b>Click or drop file<br />here to attach<br />to post</DropBox>
              <DropBox><b>Upload Image:</b>Click or drop image here to add to your album.</DropBox>
            </DropColumn>
          </Content>

          <Footer>© 2016-17 Snitz Forums Mvc</Footer>
        </Page>
        <ScrollBar>
          <ScrollArrow />
          <ScrollThumb />
          <ScrollArrow $down />
        </ScrollBar>
      </Viewport>

      <Taskbar>
        <StartBtn><WindowsLogo /></StartBtn>
        <SearchBox>
          <Cortana />
          Ask me anything
          <SearchMic><Mic size={17} strokeWidth={1.3} /></SearchMic>
        </SearchBox>
        <TaskViewBtn><TaskViewIcon /></TaskViewBtn>
        <TaskBtn $open><FolderIcon /></TaskBtn>
        <TaskBtn $open $active><ChromeIcon /></TaskBtn>
        <TaskBtn><AvastIcon /></TaskBtn>
        <TaskBtn><ConsoleIcon /></TaskBtn>
        <TaskBtn $open><FileZillaIcon /></TaskBtn>
        <TaskBtn $open><IdeaIcon /></TaskBtn>
        <TaskBtn $open><DriveIcon /></TaskBtn>
        <Tray>
          <TrayIcon><ChevronUp /></TrayIcon>
          <TrayIcon><NetworkIcon /></TrayIcon>
          <TrayIcon><VolumeIcon /></TrayIcon>
          <TrayLang>ENG</TrayLang>
          <Clock>09:11<br />23/03/2017</Clock>
          <Notify><CommentIcon /></Notify>
        </Tray>
      </Taskbar>
    </Screen>
  )
}
